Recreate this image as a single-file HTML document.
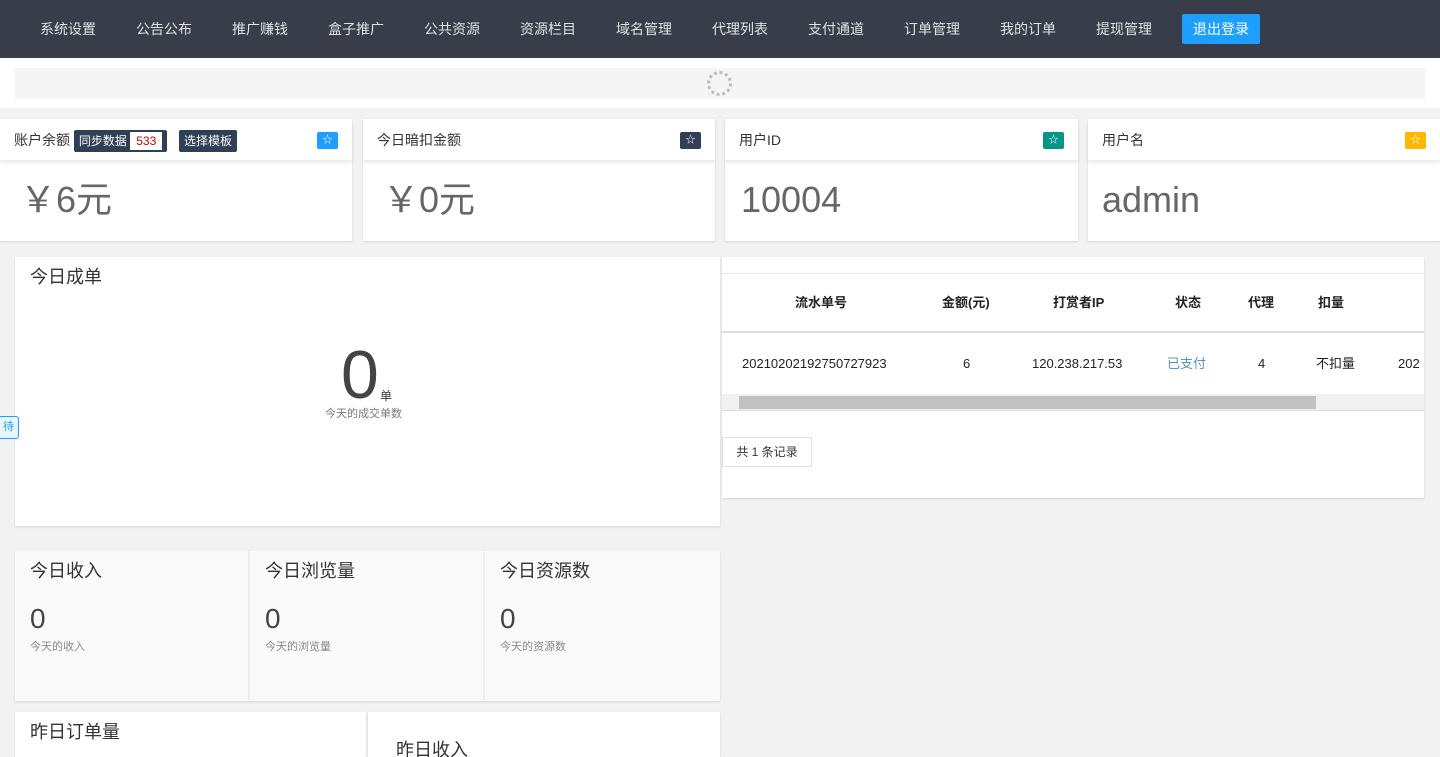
<!DOCTYPE html>
<html><head><meta charset="utf-8"><style>
*{box-sizing:border-box;margin:0;padding:0}
html{overflow:hidden;height:757px}
body{width:1440px;height:757px;overflow:hidden;background:#f2f2f2;font-family:"Liberation Sans","Noto Sans CJK SC",sans-serif;color:#333;position:relative}
.nav{position:absolute;left:0;top:0;width:1440px;height:58px;background:#393d49}
.nav span{position:absolute;top:19px;color:#fff;font-size:14px;opacity:.85;line-height:20px}
.nav .out{top:14px;left:1182px;width:78px;height:30px;background:#1e9fff;color:#fff;opacity:1;font-size:14px;line-height:30px;text-align:center;border-radius:2px}
.abs{position:absolute}
.card{position:absolute;background:#fff;box-shadow:0 1px 2px rgba(0,0,0,.12)}
.hd{position:absolute;left:0;top:0;right:0;height:42px;border-bottom:1px solid #eee;box-shadow:0 2px 3px rgba(0,0,0,.08);font-size:14px;line-height:42px;padding-left:14px}
.star{position:absolute;right:14px;top:13px;width:21px;height:17px;color:#fff;font-size:10px;line-height:17px;text-align:center;border-radius:2px}
.big{position:absolute;left:20px;top:56px;font-size:36px;color:#666;line-height:50px}
.tag{display:inline-block;background:#2f4056;color:#fff;font-size:12px;height:22px;line-height:22px;padding:0 5px;vertical-align:middle;border-radius:2px}
.row span{line-height:18px;top:0}
</style></head><body>
<div class="nav">
<span style="left:40px">系统设置</span><span style="left:136px">公告公布</span><span style="left:232px">推广赚钱</span><span style="left:328px">盒子推广</span><span style="left:424px">公共资源</span><span style="left:520px">资源栏目</span><span style="left:616px">域名管理</span><span style="left:712px">代理列表</span><span style="left:808px">支付通道</span><span style="left:904px">订单管理</span><span style="left:1000px">我的订单</span><span style="left:1096px">提现管理</span>
<span class="out">退出登录</span></div>
<div class="abs" style="left:0;top:58px;width:1440px;height:50px;background:#fff"></div>
<div class="abs" style="left:15px;top:68px;width:1410px;height:31px;background:#f5f5f5"></div>
<div class="abs" style="left:707px;top:71px;width:25px;height:25px;border:3px dotted #bbb;border-radius:50%"></div>

<div class="card" style="left:0;top:119px;width:352px;height:122px"><div class="hd">账户余额 <span class="tag">同步数据 <span style="background:#fff;color:#c00;padding:0 6px;display:inline-block;height:18px;line-height:18px">533</span></span> &nbsp;&nbsp;<span class="tag">选择模板</span></div><div class="star" style="background:#1e9fff">☆</div><div class="big">￥6元</div></div>
<div class="card" style="left:363px;top:119px;width:352px;height:122px"><div class="hd">今日暗扣金额</div><div class="star" style="background:#2f4056">☆</div><div class="big">￥0元</div></div>
<div class="card" style="left:725px;top:119px;width:353px;height:122px"><div class="hd">用户ID</div><div class="star" style="background:#009688">☆</div><div class="big" style="left:16px;top:56px">10004</div></div>
<div class="card" style="left:1088px;top:119px;width:352px;height:122px"><div class="hd">用户名</div><div class="star" style="background:#ffb800">☆</div><div class="big" style="left:14px;top:56px">admin</div></div>

<div class="card" style="left:15px;top:257px;width:705px;height:269px"><div class="abs" style="left:15px;top:6px;font-size:18px">今日成单</div>
<div class="abs" style="left:326px;top:78px;font-size:68px;color:#444;line-height:80px">0</div><div class="abs" style="left:365px;top:130px;font-size:12px">单</div><div class="abs" style="left:310px;top:148px;font-size:11px;color:#777">今天的成交单数</div></div>
<div class="abs" style="left:-6px;top:416px;width:25px;height:23px;border:1px solid #1e9fff;background:#e8f6ff;border-radius:3px;font-size:11px;color:#1e9fff;line-height:21px;text-align:right;padding-right:4px">待</div>

<div class="card" style="left:722px;top:257px;width:702px;height:241px">
<div class="abs" style="left:0;top:16px;width:702px;height:60px;border-top:1px solid #e6e6e6;border-bottom:2px solid #ddd"></div>
<div class="abs row" style="top:37px;left:0;width:702px;font-size:13px;font-weight:bold;color:#222">
<span class="abs" style="left:73px">流水单号</span><span class="abs" style="left:220px">金额(元)</span><span class="abs" style="left:331px">打赏者IP</span><span class="abs" style="left:453px">状态</span><span class="abs" style="left:526px">代理</span><span class="abs" style="left:596px">扣量</span></div>
<div class="abs row" style="top:98px;left:0;width:702px;font-size:13px;color:#222">
<span class="abs" style="left:20px">20210202192750727923</span><span class="abs" style="left:241px">6</span><span class="abs" style="left:310px">120.238.217.53</span><span class="abs" style="left:445px;color:#5b8fc8">已支付</span><span class="abs" style="left:536px">4</span><span class="abs" style="left:594px">不扣量</span><span class="abs" style="left:676px">202</span></div>
<div class="abs" style="left:0;top:137px;width:702px;height:17px;background:#f1f1f1;border-bottom:1px solid #ddd"></div>
<div class="abs" style="left:17px;top:139px;width:577px;height:13px;background:#c1c1c1"></div>
<div class="abs" style="left:0;top:180px;width:90px;height:30px;border:1px solid #e2e2e2;font-size:12px;line-height:28px;text-align:center">共 1 条记录</div>
</div>

<div class="card" style="left:15px;top:551px;width:705px;height:150px;background:#fafafa"></div>
<div class="abs" style="left:248px;top:551px;width:2px;height:150px;background:#eee"></div>
<div class="abs" style="left:483px;top:551px;width:2px;height:150px;background:#eee"></div>
<div class="abs" style="left:30px;top:557px;font-size:18px">今日收入</div><div class="abs" style="left:30px;top:603px;font-size:28px;color:#444">0</div><div class="abs" style="left:30px;top:638px;font-size:11px;color:#888">今天的收入</div>
<div class="abs" style="left:265px;top:557px;font-size:18px">今日浏览量</div><div class="abs" style="left:265px;top:603px;font-size:28px;color:#444">0</div><div class="abs" style="left:265px;top:638px;font-size:11px;color:#888">今天的浏览量</div>
<div class="abs" style="left:500px;top:557px;font-size:18px">今日资源数</div><div class="abs" style="left:500px;top:603px;font-size:28px;color:#444">0</div><div class="abs" style="left:500px;top:638px;font-size:11px;color:#888">今天的资源数</div>

<div class="card" style="left:15px;top:712px;width:351px;height:45px"><div class="abs" style="left:15px;top:6px;font-size:18px">昨日订单量</div></div>
<div class="card" style="left:368px;top:712px;width:352px;height:45px"><div class="abs" style="left:28px;top:24px;font-size:18px">昨日收入</div></div>
</body></html>
